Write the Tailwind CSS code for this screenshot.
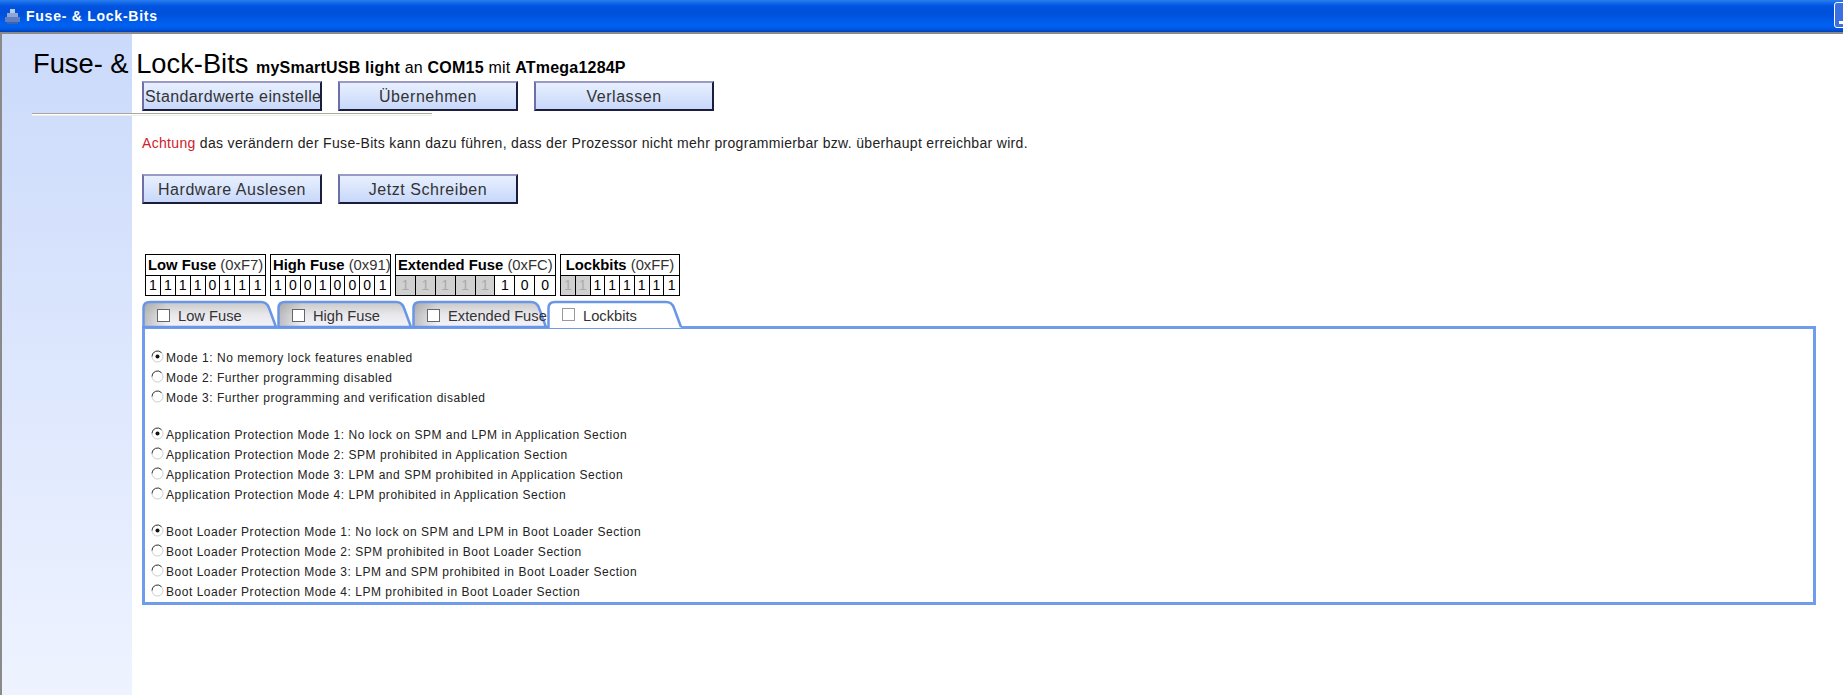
<!DOCTYPE html>
<html lang="de">
<head>
<meta charset="UTF-8" />
<title>Fuse- & Lock-Bits</title>
<script src="https://cdn.jsdelivr.net/npm/@tailwindcss/browser@4"></script>
</head>
<body class="bg-white h-[695px] w-[1843px] overflow-hidden font-['Liberation_Sans',Arial,sans-serif] text-[#222]">

<!-- title bar -->
<div class="h-[32px] flex items-center relative bg-[linear-gradient(to_bottom,#2a7df0_0px,#1a6fe8_2px,#0054e0_6px,#0050da_14px,#0062f2_25px,#0058e4_29px,#0040b8_32px)]">
    <svg class="ml-[4px] w-[17px] h-[17px]" viewBox="0 0 17 17">
        <rect x="6" y="1" width="5" height="4" fill="#b9c9ea" />
        <rect x="3" y="5" width="11" height="4" fill="#8ea6d6" />
        <rect x="1" y="9" width="15" height="5" fill="#5f7fc0" />
        <rect x="3" y="14" width="11" height="2" fill="#3f62ad" />
    </svg>
    <span class="ml-[5px] text-white font-bold text-[14px] tracking-[0.75px]">Fuse- &amp; Lock-Bits</span>
    <div class="absolute right-[-12px] top-[2px] w-[21px] h-[26px] rounded-[3px] border border-white bg-[#3c6fe0]">
        <div class="absolute left-[4px] top-[18px] w-[6px] h-[3px] bg-white"></div>
    </div>
</div>
<div class="h-[2px] bg-[#8a8a8a]"></div>

<!-- page -->
<div class="relative h-[661px] border-l-2 border-[#8a8a8a]">
    <div class="absolute left-0 top-0 bottom-0 w-[130px] bg-[linear-gradient(to_bottom,#cbdafb,#eef3ff)]"></div>

    <div class="relative">
        <h1 class="pl-[31px] pt-[14px] h-[47px] text-[27.3px] leading-[32px] text-black whitespace-nowrap">Fuse- &amp; Lock-Bits <span class="text-[16px] tracking-[0.22px]"><b>mySmartUSB light</b> an <b>COM15</b> mit <b>ATmega1284P</b></span></h1>

        <div class="relative ml-[140px] flex gap-[16px] h-[30px]">
            <button class="w-[180px] h-[30px] pt-[1px] border-2 border-t-[#9a9ac4] border-l-[#6f6fa8] border-r-[#1c1c3c] border-b-[#1c1c3c] bg-[linear-gradient(to_bottom,#e8f0ff,#c8d8fa)] text-[#333] text-[16px] tracking-[0.4px] whitespace-nowrap text-left pl-[1px]">Standardwerte einstelle</button>
            <button class="w-[180px] h-[30px] pt-[1px] border-2 border-t-[#9a9ac4] border-l-[#6f6fa8] border-r-[#1c1c3c] border-b-[#1c1c3c] bg-[linear-gradient(to_bottom,#e8f0ff,#c8d8fa)] text-[#333] text-[16px] tracking-[0.55px]">Übernehmen</button>
            <button class="w-[180px] h-[30px] pt-[1px] border-2 border-t-[#9a9ac4] border-l-[#6f6fa8] border-r-[#1c1c3c] border-b-[#1c1c3c] bg-[linear-gradient(to_bottom,#e8f0ff,#c8d8fa)] text-[#333] text-[16px] tracking-[0.55px]">Verlassen</button>
        </div>

        <hr class="ml-[30px] mt-[2px] w-[400px] h-[3px] border-0 border-t border-t-[#a8a8a0] border-b border-b-[#eeeee6] bg-white" />

        <p class="ml-[140px] mt-[17px] h-[20px] leading-[20px] text-[14px] tracking-[0.32px] whitespace-nowrap"><span class="text-[#d0202a]">Achtung</span> das verändern der Fuse-Bits kann dazu führen, dass der Prozessor nicht mehr programmierbar bzw. überhaupt erreichbar wird.</p>

        <div class="ml-[140px] mt-[21px] flex gap-[16px] h-[30px]">
            <button class="w-[180px] h-[30px] pt-[1px] border-2 border-t-[#9a9ac4] border-l-[#6f6fa8] border-r-[#1c1c3c] border-b-[#1c1c3c] bg-[linear-gradient(to_bottom,#e8f0ff,#c8d8fa)] text-[#333] text-[16px] tracking-[0.55px]">Hardware Auslesen</button>
            <button class="w-[180px] h-[30px] pt-[1px] border-2 border-t-[#9a9ac4] border-l-[#6f6fa8] border-r-[#1c1c3c] border-b-[#1c1c3c] bg-[linear-gradient(to_bottom,#e8f0ff,#c8d8fa)] text-[#333] text-[16px] tracking-[0.55px]">Jetzt Schreiben</button>
        </div>

        <!-- fuse tables -->
        <div class="ml-[143px] mt-[50px] flex gap-[4px] text-[14px] text-black">
            <div class="w-[121px] border border-black">
                <div class="h-[21px] leading-[20px] pl-[2px] text-[14.8px] border-b border-black whitespace-nowrap"><b>Low Fuse</b> <span class="text-[#333]">(0xF7)</span></div>
                <div class="grid grid-cols-8 h-[19px] leading-[19px] text-center divide-x divide-black"><span>1</span><span>1</span><span>1</span><span>1</span><span>0</span><span>1</span><span>1</span><span>1</span></div>
            </div>
            <div class="w-[121px] border border-black">
                <div class="h-[21px] leading-[20px] pl-[2px] text-[14.8px] border-b border-black whitespace-nowrap"><b>High Fuse</b> <span class="text-[#333]">(0x91)</span></div>
                <div class="grid grid-cols-8 h-[19px] leading-[19px] text-center divide-x divide-black"><span>1</span><span>0</span><span>0</span><span>1</span><span>0</span><span>0</span><span>0</span><span>1</span></div>
            </div>
            <div class="w-[161px] border border-black">
                <div class="h-[21px] leading-[20px] pl-[2px] text-[14.8px] border-b border-black whitespace-nowrap"><b>Extended Fuse</b> <span class="text-[#333]">(0xFC)</span></div>
                <div class="grid grid-cols-8 h-[19px] leading-[19px] text-center divide-x divide-black">
                    <span class="bg-[#d0d0d0] text-[#aaa]">1</span><span class="bg-[#d0d0d0] text-[#aaa]">1</span><span class="bg-[#d0d0d0] text-[#aaa]">1</span><span class="bg-[#d0d0d0] text-[#aaa]">1</span><span class="bg-[#d0d0d0] text-[#aaa]">1</span><span>1</span><span>0</span><span>0</span>
                </div>
            </div>
            <div class="w-[120px] border border-black">
                <div class="h-[21px] leading-[20px] text-center text-[14.8px] border-b border-black whitespace-nowrap"><b>Lockbits</b> <span class="text-[#333]">(0xFF)</span></div>
                <div class="grid grid-cols-8 h-[19px] leading-[19px] text-center divide-x divide-black">
                    <span class="bg-[#d0d0d0] text-[#aaa]">1</span><span class="bg-[#d0d0d0] text-[#aaa]">1</span><span>1</span><span>1</span><span>1</span><span>1</span><span>1</span><span>1</span>
                </div>
            </div>
        </div>

        <!-- tabs -->
        <div class="ml-[140px] mt-[4px] flex h-[28px] relative z-10 text-[14.7px] text-[#333]">
            <div class="relative w-[135px] h-[28px]">
                <svg class="absolute inset-0" width="137" height="28" viewBox="0 0 137 28">
                    <defs>
                        <linearGradient id="tabv" x1="0" y1="0" x2="0" y2="1"><stop offset="0" stop-color="#c8c8c8" /><stop offset="0.5" stop-color="#e8e8ec" /><stop offset="1" stop-color="#f2f2f8" /></linearGradient>
                        <linearGradient id="tabh" x1="0" y1="0" x2="1" y2="0"><stop offset="0" stop-color="#808080" stop-opacity="0.45" /><stop offset="0.18" stop-color="#808080" stop-opacity="0" /></linearGradient>
                    </defs>
                    <path d="M1.5 27V8Q1.5 2 8 2H119Q125 2 127 8L134 27Z" fill="url(#tabv)" />
                    <path d="M1.5 27V8Q1.5 2 8 2H119Q125 2 127 8L134 27Z" fill="url(#tabh)" stroke="#6a96e8" stroke-width="2.5" />
                </svg>
                <span class="absolute left-[15px] top-[9px] w-[13px] h-[13px] border border-[#666] bg-white"></span>
                <span class="absolute left-[36px] top-[6px] leading-[20px]">Low Fuse</span>
            </div>
            <div class="relative w-[135px] h-[28px]">
                <svg class="absolute inset-0" width="137" height="28" viewBox="0 0 137 28">
                    <path d="M1.5 27V8Q1.5 2 8 2H119Q125 2 127 8L134 27Z" fill="url(#tabv)" />
                    <path d="M1.5 27V8Q1.5 2 8 2H119Q125 2 127 8L134 27Z" fill="url(#tabh)" stroke="#6a96e8" stroke-width="2.5" />
                </svg>
                <span class="absolute left-[15px] top-[9px] w-[13px] h-[13px] border border-[#666] bg-white"></span>
                <span class="absolute left-[36px] top-[6px] leading-[20px]">High Fuse</span>
            </div>
            <div class="relative w-[135px] h-[28px]">
                <svg class="absolute inset-0" width="137" height="28" viewBox="0 0 137 28">
                    <path d="M1.5 27V8Q1.5 2 8 2H119Q125 2 127 8L134 27Z" fill="url(#tabv)" />
                    <path d="M1.5 27V8Q1.5 2 8 2H119Q125 2 127 8L134 27Z" fill="url(#tabh)" stroke="#6a96e8" stroke-width="2.5" />
                </svg>
                <span class="absolute left-[15px] top-[9px] w-[13px] h-[13px] border border-[#666] bg-white"></span>
                <span class="absolute left-[36px] top-[6px] leading-[20px] whitespace-nowrap">Extended Fuse</span>
            </div>
            <div class="relative w-[137px] h-[28px]">
                <svg class="absolute inset-0" width="137" height="28" viewBox="0 0 137 28">
                    <path d="M0 28H1.5V8Q1.5 2 8 2H119Q125 2 127 8L134 28Z" fill="#fff" />
                    <path d="M1.5 28V8Q1.5 2 8 2H119Q125 2 127 8L134 27" fill="none" stroke="#6a96e8" stroke-width="2.5" />
                </svg>
                <span class="absolute left-[15px] top-[8px] w-[13px] h-[13px] border border-[#999] bg-white"></span>
                <span class="absolute left-[36px] top-[6px] leading-[20px]">Lockbits</span>
            </div>
        </div>

        <!-- panel -->
        <div class="ml-[140px] w-[1674px] h-[279px] -mt-[2px] border-[3px] border-[#6f9cec] pl-[6px] pt-[19px] text-[12px] text-[#222] tracking-[0.53px]">
            <div class="flex items-center h-[20px]"><svg class="w-[13px] h-[13px] mr-[2px] shrink-0 -mt-[3px]" viewBox="0 0 13 13"><circle cx="6.5" cy="6.5" r="5.5" fill="#fff" stroke="#ccc" /><path d="M1 6.5A5.5 5.5 0 0 1 10.5 2.7" fill="none" stroke="#444" /><circle cx="6.5" cy="6.5" r="2" fill="#111" /></svg>Mode 1: No memory lock features enabled</div>
            <div class="flex items-center h-[20px]"><svg class="w-[13px] h-[13px] mr-[2px] shrink-0 -mt-[3px]" viewBox="0 0 13 13"><circle cx="6.5" cy="6.5" r="5.5" fill="#fff" stroke="#ccc" /><path d="M1 6.5A5.5 5.5 0 0 1 10.5 2.7" fill="none" stroke="#444" /></svg>Mode 2: Further programming disabled</div>
            <div class="flex items-center h-[20px]"><svg class="w-[13px] h-[13px] mr-[2px] shrink-0 -mt-[3px]" viewBox="0 0 13 13"><circle cx="6.5" cy="6.5" r="5.5" fill="#fff" stroke="#ccc" /><path d="M1 6.5A5.5 5.5 0 0 1 10.5 2.7" fill="none" stroke="#444" /></svg>Mode 3: Further programming and verification disabled</div>

            <div class="flex items-center h-[20px] mt-[17px]"><svg class="w-[13px] h-[13px] mr-[2px] shrink-0 -mt-[3px]" viewBox="0 0 13 13"><circle cx="6.5" cy="6.5" r="5.5" fill="#fff" stroke="#ccc" /><path d="M1 6.5A5.5 5.5 0 0 1 10.5 2.7" fill="none" stroke="#444" /><circle cx="6.5" cy="6.5" r="2" fill="#111" /></svg>Application Protection Mode 1: No lock on SPM and LPM in Application Section</div>
            <div class="flex items-center h-[20px]"><svg class="w-[13px] h-[13px] mr-[2px] shrink-0 -mt-[3px]" viewBox="0 0 13 13"><circle cx="6.5" cy="6.5" r="5.5" fill="#fff" stroke="#ccc" /><path d="M1 6.5A5.5 5.5 0 0 1 10.5 2.7" fill="none" stroke="#444" /></svg>Application Protection Mode 2: SPM prohibited in Application Section</div>
            <div class="flex items-center h-[20px]"><svg class="w-[13px] h-[13px] mr-[2px] shrink-0 -mt-[3px]" viewBox="0 0 13 13"><circle cx="6.5" cy="6.5" r="5.5" fill="#fff" stroke="#ccc" /><path d="M1 6.5A5.5 5.5 0 0 1 10.5 2.7" fill="none" stroke="#444" /></svg>Application Protection Mode 3: LPM and SPM prohibited in Application Section</div>
            <div class="flex items-center h-[20px]"><svg class="w-[13px] h-[13px] mr-[2px] shrink-0 -mt-[3px]" viewBox="0 0 13 13"><circle cx="6.5" cy="6.5" r="5.5" fill="#fff" stroke="#ccc" /><path d="M1 6.5A5.5 5.5 0 0 1 10.5 2.7" fill="none" stroke="#444" /></svg>Application Protection Mode 4: LPM prohibited in Application Section</div>

            <div class="flex items-center h-[20px] mt-[17px]"><svg class="w-[13px] h-[13px] mr-[2px] shrink-0 -mt-[3px]" viewBox="0 0 13 13"><circle cx="6.5" cy="6.5" r="5.5" fill="#fff" stroke="#ccc" /><path d="M1 6.5A5.5 5.5 0 0 1 10.5 2.7" fill="none" stroke="#444" /><circle cx="6.5" cy="6.5" r="2" fill="#111" /></svg>Boot Loader Protection Mode 1: No lock on SPM and LPM in Boot Loader Section</div>
            <div class="flex items-center h-[20px]"><svg class="w-[13px] h-[13px] mr-[2px] shrink-0 -mt-[3px]" viewBox="0 0 13 13"><circle cx="6.5" cy="6.5" r="5.5" fill="#fff" stroke="#ccc" /><path d="M1 6.5A5.5 5.5 0 0 1 10.5 2.7" fill="none" stroke="#444" /></svg>Boot Loader Protection Mode 2: SPM prohibited in Boot Loader Section</div>
            <div class="flex items-center h-[20px]"><svg class="w-[13px] h-[13px] mr-[2px] shrink-0 -mt-[3px]" viewBox="0 0 13 13"><circle cx="6.5" cy="6.5" r="5.5" fill="#fff" stroke="#ccc" /><path d="M1 6.5A5.5 5.5 0 0 1 10.5 2.7" fill="none" stroke="#444" /></svg>Boot Loader Protection Mode 3: LPM and SPM prohibited in Boot Loader Section</div>
            <div class="flex items-center h-[20px]"><svg class="w-[13px] h-[13px] mr-[2px] shrink-0 -mt-[3px]" viewBox="0 0 13 13"><circle cx="6.5" cy="6.5" r="5.5" fill="#fff" stroke="#ccc" /><path d="M1 6.5A5.5 5.5 0 0 1 10.5 2.7" fill="none" stroke="#444" /></svg>Boot Loader Protection Mode 4: LPM prohibited in Boot Loader Section</div>
        </div>
    </div>
</div>
</body>
</html>
